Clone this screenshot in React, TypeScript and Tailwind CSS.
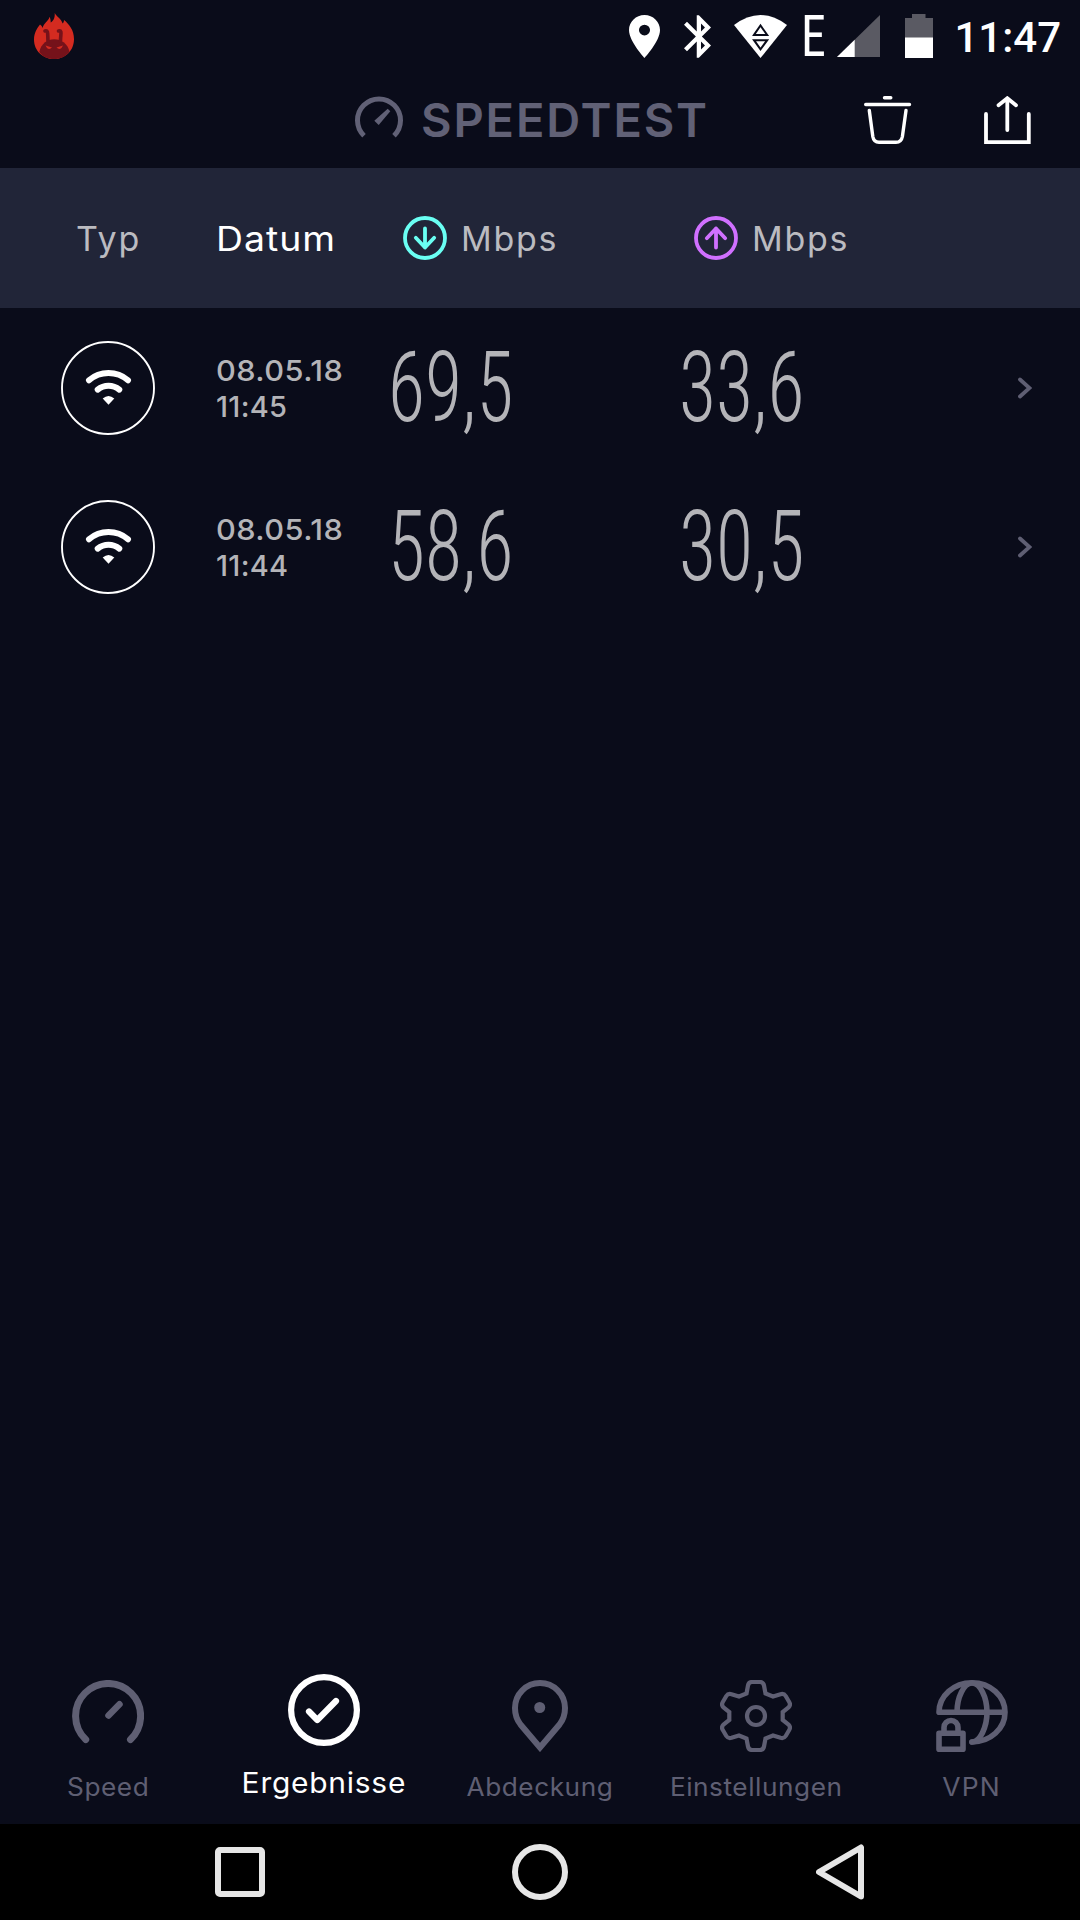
import type { ReactNode } from "react";
import { clsx } from "clsx";

interface Result {
  date: string;
  time: string;
  download: string;
  upload: string;
}

interface Tab {
  label: string;
  icon: ReactNode;
  tracking: string;
  active?: boolean;
}

const results: Result[] = [
  { date: "08.05.18", time: "11:45", download: "69,5", upload: "33,6" },
  { date: "08.05.18", time: "11:44", download: "58,6", upload: "30,5" },
];

const AppBadge = () => (
  <svg width="40" height="46" viewBox="0 0 40 46">
    <path
      d="M20.7 0C23 4 27.500 6 28.600 10.500C29.600 9.500 30 8.500 30 7C35 11 40 17 40 26C40 38 31 46 20 46S0 38 0 26.500C0 20 3 15.500 6 11.500C7.200 12.500 8.300 13.500 8.700 15C9.500 10 14.500 8.500 15.500 3.700C16.500 5.500 16.800 7.500 16.700 9.500C20 7.500 21 4 20.700 0Z"
      fill="#d42b20"
    />
    <path d="M5.300 39C7 31 13 26.300 20.200 26.300S34 31 35.500 39C31 44 26 46 20 46S9 44 5.300 39Z" fill="#75121a" />
    <path d="M11 18C14.500 17 13.500 21 14 28M24.500 18C28.500 17 26.500 21 26.500 28" fill="none" stroke="#75121a" strokeWidth="3.600" strokeLinecap="round" />
    <path d="M11.500 32.500L18 34.500Q15.500 37 13 35ZM29 32.500L22.500 34.500Q25 37 27.500 35Z" fill="#d42b20" />
  </svg>
);

const StatusBar = () => (
  <div className="flex h-[72px] items-center pl-[34px] pr-[19px] text-white">
    <AppBadge />
    <svg className="ml-auto" width="31" height="43" viewBox="5 2 14 20" preserveAspectRatio="none" fill="currentColor">
      <path d="M12 2C8.130 2 5 5.130 5 9c0 5.250 7 13 7 13s7-7.750 7-13c0-3.870-3.130-7-7-7zm0 9.500a2.500 2.500 0 1 1 0-5 2.500 2.500 0 0 1 0 5z" />
    </svg>
    <svg className="ml-6" width="27" height="43" viewBox="5 2 12.71 20" fill="currentColor">
      <path d="M17.710 7.710L12 2h-1v7.590L6.410 5 5 6.410 10.590 12 5 17.590 6.410 19 11 14.410V22h1l5.710-5.710-4.300-4.290 4.300-4.290zM13 5.830l1.880 1.880L13 9.590V5.830zm1.880 10.460L13 18.170v-3.760l1.880 1.880z" />
    </svg>
    <svg className="ml-[23px]" width="53" height="43" viewBox="0 0 53 43" fill="currentColor">
      <path d="M0 10Q26.500 -10 53 10L26.500 43Z" />
      <path d="M20 19.900L26.500 10.500L33.200 19.900ZM20 25.200H33.200L26.500 34.300Z" stroke="#0a0c1a" strokeWidth="2" />
    </svg>
    <span className="ml-[14px] inline-block w-[26px] origin-left scale-x-[0.86] font-['Roboto_Condensed',Roboto,sans-serif] text-[58px] leading-[72px]">
      E
    </span>
    <svg className="ml-[10px]" width="43" height="42" viewBox="0 0 43 42">
      <path d="M43 0V42H0Z" fill="#5a5a63" />
      <path d="M17.700 24.700V42H0Z" fill="#fff" />
    </svg>
    <svg className="ml-[25px]" width="28" height="44" viewBox="0 0 28 44">
      <path d="M7 0H20.500V4H28V24H0V4H7Z" fill="#5a5a63" />
      <path d="M0 23.500H28V44H0Z" fill="#fff" />
    </svg>
    <span className="ml-[21px] pt-[3px] font-[Roboto,sans-serif] text-[42px] font-medium leading-[60px]">11:47</span>
  </div>
);

const Header = () => (
  <header className="flex h-24 items-center pl-[355px] pr-[48px]">
    <svg width="48" height="48" viewBox="0 0 48 48" fill="none">
      <path d="M9 39.800A21.500 21.500 0 1 1 39 39.800" stroke="#616176" strokeWidth="5" />
      <path d="M19.300 24.700L32.700 12.700L35.300 15.300L23.700 29Z" fill="#616176" />
    </svg>
    <h1 className="ml-[18px] text-[47px] font-semibold leading-[60px] tracking-[1.85px] text-[#616176]">SPEEDTEST</h1>
    <svg className="ml-auto" width="48" height="48" viewBox="0 0 48 48" fill="none" stroke="#fff" strokeWidth="3.4" strokeLinecap="round">
      <path d="M20.500 1.700H26.800M1.700 8.500H45.500" />
      <path d="M5.300 14.500L8.800 40.500Q9.800 46.300 15 46.300H32Q37.300 46.300 38.400 40.500L42 14.500" />
    </svg>
    <svg className="ml-[72px]" width="48" height="48" viewBox="0 0 48 48" fill="none" stroke="#fff" strokeWidth="3.8" strokeLinecap="round">
      <path d="M2 18V46.200H44.800V18" />
      <path d="M23.300 34V3M14.500 9.200L23.300 2.200L32 9.200" />
    </svg>
  </header>
);

const DirectionIcon = ({ up = false }: { up?: boolean }) => (
  <svg
    className={clsx(up ? "rotate-180 text-[#d070ff]" : "text-[#6afff3]")}
    width="44"
    height="44"
    viewBox="0 0 44 44"
    fill="none"
    stroke="currentColor"
    strokeWidth="3.8"
    strokeLinecap="round"
    strokeLinejoin="round"
  >
    <circle cx="22" cy="22" r="20" />
    <path d="M22 12.500V31.500M12.800 21.800L22 31.500L31.200 21.800" />
  </svg>
);

const TableHead = () => (
  <div className="grid h-[140px] grid-cols-[216px_175px_291px_1fr] items-center bg-[#212538] text-[34px] leading-[44px] text-[#bbbbc0]">
    <span className="pl-[76px] pt-[2px] tracking-[1.8px]">Typ</span>
    <span className="origin-left scale-x-110 pt-[2px] tracking-[0.9px] text-white">Datum</span>
    <div className="flex items-center gap-[14px] pl-3">
      <DirectionIcon />
      <span className="pt-[2px] tracking-[1.7px]">Mbps</span>
    </div>
    <div className="flex items-center gap-[14px] pl-3">
      <DirectionIcon up />
      <span className="pt-[2px] tracking-[1.7px]">Mbps</span>
    </div>
  </div>
);

const Speed = ({ value }: { value: string }) => (
  <span className="-ml-[3px] block origin-left scale-x-[0.775] font-['Roboto_Condensed',Roboto,sans-serif] text-[98px] font-light leading-[110px]">
    {value}
  </span>
);

const ResultRow = ({ date, time, download, upload }: Result) => (
  <div className="grid h-[159px] grid-cols-[216px_175px_291px_1fr_62px] items-center text-[#b4b4b8]">
    <div className="ml-[61px] size-[94px]">
      <svg width="94" height="94" viewBox="0 0 94 94" fill="none" stroke="#fff">
        <circle cx="47" cy="47" r="46" strokeWidth="1.9" />
        <path d="M28 39.300A30 30 0 0 1 67 39.300M36.700 48.600A17 17 0 0 1 58.300 48.600" strokeWidth="6" strokeLinecap="round" />
        <path d="M41.700 57.500Q47.500 52.500 53.300 57.500L47.500 63.700Z" fill="#fff" stroke="none" />
      </svg>
    </div>
    <div className="pt-[2px] text-[29px] font-medium leading-9">
      <div className="origin-left scale-x-[1.06] tracking-[0.4px]">{date}</div>
      <div className="tracking-[0.3px]">{time}</div>
    </div>
    <Speed value={download} />
    <Speed value={upload} />
    <svg width="14" height="22" viewBox="0 0 14 22" fill="none" stroke="#5f5f73" strokeWidth="3.8" strokeLinecap="round">
      <path d="M2 2.500L11.500 11L2 19.500" />
    </svg>
  </div>
);

const tabs: Tab[] = [
  {
    label: "Speed",
    tracking: "scale-x-105 tracking-[0.5px]",
    icon: (
      <g strokeWidth="7" strokeLinecap="round">
        <path d="M13.700 59.500A32.500 32.500 0 1 1 58.500 59.500" />
        <path d="M36.500 35.500L47.500 24.300" strokeWidth="6.500" />
      </g>
    ),
  },
  {
    label: "Ergebnisse",
    tracking: "scale-x-107 tracking-[0.7px]",
    active: true,
    icon: (
      <g strokeWidth="6.200" strokeLinecap="round" strokeLinejoin="round">
        <circle cx="36" cy="36" r="32.900" />
        <path d="M21 37.500L29.300 46L48 27" />
      </g>
    ),
  },
  {
    label: "Abdeckung",
    tracking: "scale-x-105 tracking-[0.5px]",
    icon: (
      <>
        <path d="M36 67.500L16.500 44.500C12.500 39.500 11 34 11 28A25 25 0 0 1 61 28C61 34 59.500 39.500 55.500 44.500Z" strokeWidth="6" />
        <circle cx="35.700" cy="27.500" r="5.500" fill="currentColor" stroke="none" />
      </>
    ),
  },
  {
    label: "Einstellungen",
    tracking: "scale-x-105 tracking-[0.5px]",
    icon: (
      <g strokeWidth="4.200">
        <path d="M26.500 13.500L28 5.500Q28.700 2 32 2H40Q43.300 2 44 5.500L45.500 13.500L53 16.500L60.500 14.200Q64 13.300 65.700 16L69.200 22Q71 25 68.500 27.500L62.700 32V40L68.500 44.500Q71 47 69.200 50L65.700 56Q64 58.700 60.500 57.800L53 55.500L45.500 58.500L44 66.500Q43.300 70 40 70H32Q28.700 70 28 66.500L26.500 58.500L19 55.500L11.500 57.800Q8 58.700 6.300 56L2.800 50Q1 47 3.500 44.500L9.300 40V32L3.500 27.500Q1 25 2.800 22L6.300 16Q8 13.300 11.500 14.200L19 16.500Z" />
        <circle cx="36" cy="36" r="9" />
      </g>
    ),
  },
  {
    label: "VPN",
    tracking: "scale-x-106 tracking-[1px]",
    icon: (
      <g strokeWidth="5.600" strokeLinecap="round" strokeLinejoin="round">
        <path d="M3 32.300A33 29.500 0 0 1 69 32.300A33 29.500 0 0 1 36 62M3 32.300H69" />
        <path d="M21 32.300C21 17 28 3 36 3C44 3 51 17 51 32.300C51 47 44 62 36 62" />
        <path d="M3 53.300H27V69.200H3ZM8 53V47.500a7 7 0 0 1 14 0V53" />
      </g>
    ),
  },
];

const TabBar = () => (
  <nav className="grid h-[156px] grid-cols-5">
    {tabs.map(({ label, icon, tracking, active }) => (
      <div key={label} className={clsx("flex flex-col items-center", active ? "pt-[6px] text-white" : "pt-3 text-[#5f5f73]")}>
        <svg width="72" height="72" viewBox="0 0 72 72" fill="none" stroke="currentColor">
          {icon}
        </svg>
        <span className={clsx("leading-[30px]", tracking, active ? "mt-[22px] text-[28px]" : "mt-5 text-[25px]")}>{label}</span>
      </div>
    ))}
  </nav>
);

const SystemNav = () => (
  <div className="grid h-24 grid-cols-3 place-items-center bg-black px-[90px]">
    <div className="size-[50px] rounded-[5px] border-6 border-[#e6e6e6]" />
    <div className="size-14 rounded-full border-6 border-[#e6e6e6]" />
    <svg width="48" height="56" viewBox="0 0 48 56" fill="none" stroke="#e6e6e6" strokeWidth="6" strokeLinejoin="round">
      <path d="M45 3.500V52.500L3 28Z" />
    </svg>
  </div>
);

const App = () => {
  return (
    <div className="flex h-[1920px] w-[1080px] flex-col overflow-hidden bg-[#0a0c1a] font-[Inter,sans-serif]">
      <StatusBar />
      <Header />
      <TableHead />
      <main className="flex-1">
        {results.map((result) => (
          <ResultRow key={result.time} {...result} />
        ))}
      </main>
      <TabBar />
      <SystemNav />
    </div>
  );
};

export default App;
